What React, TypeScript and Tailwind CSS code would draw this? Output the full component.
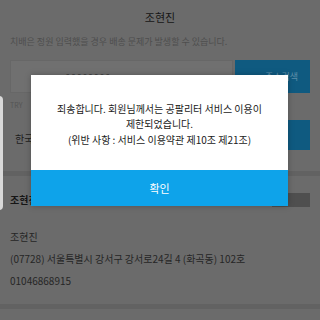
export default function App() {
  const font = { fontFamily: '"Noto Sans CJK KR", Roboto, sans-serif' };
  return (
    <div className="relative w-[320px] h-[320px] overflow-hidden bg-[#6b6b6b] text-[#1e1e1e]" style={font}>
      {/* page behind the dim */}
      <div className="flex flex-col">
        <div className="h-[34px] flex items-center justify-center text-[11px] text-[#161616]">조현진</div>
        <div className="px-[10px] text-[9px] text-[#4e4e4e] leading-[16px]">
          치배은 정원 입력했을 경우 배송 문제가 발생할 수 있습니다.
        </div>
        <div className="mt-[10px] px-[10px] flex gap-[2px] h-[33px]">
          <div className="flex-1 bg-[#707070] border border-[#676767] text-[10px] text-[#3a3a3a] pl-[55px] pt-[4px]">- - - - - - - -</div>
          <div className="w-[75px] bg-[#0f5a80] text-[9px] text-[#5e8fa9] flex items-start justify-end pr-[12px] pt-[10px]">주소검색</div>
        </div>
        <div className="mt-[3px] px-[10px] text-[7px] text-[#555] h-[18px] flex items-center">TRY</div>
        <div className="mt-[6px] px-[10px] flex gap-[2px] h-[30px]">
          <div className="flex-1 flex items-center pl-[5px] pt-[6px] text-[10px] text-[#1d1d1d]">한국</div>
          <div className="w-[75px] bg-[#0f5a80]" />
        </div>
        <div className="mt-[21px] h-[5px] bg-[#626262]" />
        <div className="mt-[16px] px-[10px] flex items-center justify-between">
          <span className="text-[10px] font-bold text-[#161616]">조현진 (기본)</span>
          <div className="w-[38px] h-[14px] bg-[#4f4f4f]" />
        </div>
        <div className="mt-[22px] px-[10px] flex flex-col gap-[7px] text-[10px] text-[#262626] leading-[15px]">
          <span>조현진</span>
          <span>(07728) 서울특별시 강서구 강서로24길 4 (화곡동) 102호</span>
          <span>01046868915</span>
        </div>
        <div className="mt-[16px] h-[5px] bg-[#626262]" />
      </div>

      {/* edge tab */}
      <div className="absolute left-[-6px] top-[96px] w-[9px] h-[114px] rounded-[4px] bg-[#d9d9d9]" />

      {/* dialog */}
      <div className="absolute left-[31px] top-[75px] w-[257px] flex flex-col shadow-[0_0_6px_rgba(0,0,0,0.25)]">
        <div className="bg-white h-[95px] flex flex-col items-center justify-center text-[10px] text-[#1a1a1a] leading-[15px] text-center pt-[2px]">
          <p>죄송합니다. 회원님께서는 공팔리터 서비스 이용이<br />제한되었습니다.</p>
          <p className="mt-[1px]">(위반 사항 : 서비스 이용약관 제10조 제21조)</p>
        </div>
        <button className="h-[36px] bg-[#0ea3ea] text-white text-[11px]">확인</button>
      </div>
    </div>
  );
}
